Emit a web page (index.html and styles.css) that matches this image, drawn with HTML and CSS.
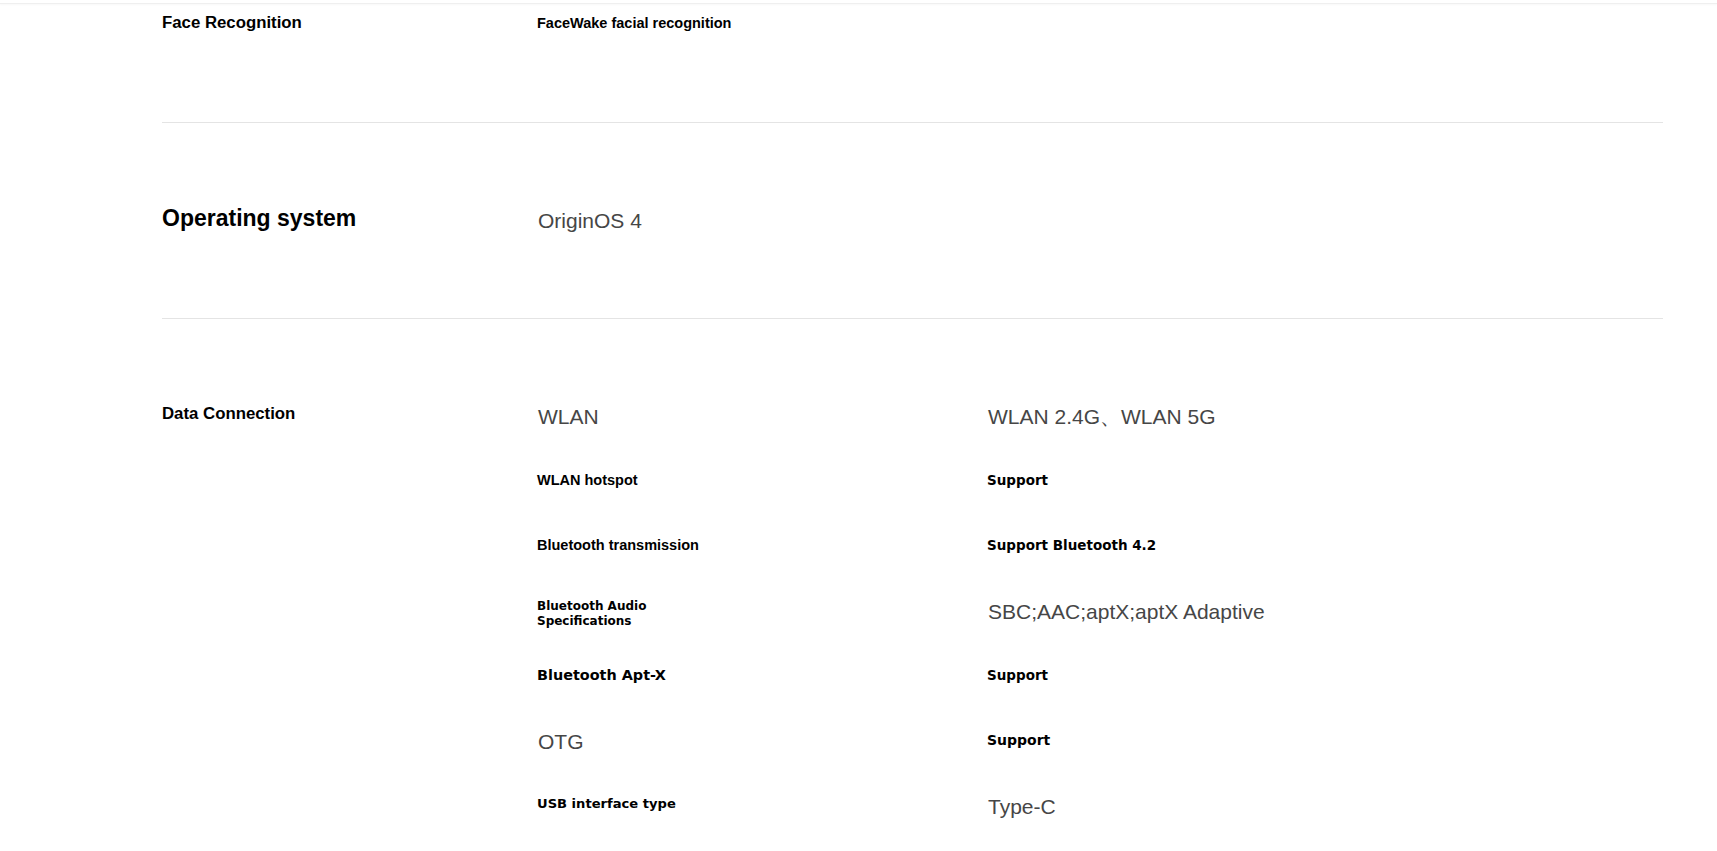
FILE: index.html
```html
<!DOCTYPE html>
<html lang="en">
<head>
    <meta charset="UTF-8">
    <meta name="viewport" content="width=device-width, initial-scale=1.0">
    <title>Specs</title>
    <link rel="stylesheet" href="styles.css">
</head>
<body>
    <div class="topbar"></div>

    <div class="specs">
        <!-- Face Recognition -->
        <section class="spec spec-first">
            <div class="spec-label"><h3>Face Recognition</h3></div>
            <div class="spec-grid">
                <div class="cell name-cond">FaceWake facial recognition</div>
                <div class="cell"></div>
            </div>
        </section>

        <!-- Operating system -->
        <section class="spec">
            <div class="spec-label"><h3 class="big">Operating system</h3></div>
            <div class="spec-grid">
                <div class="cell plain">OriginOS 4</div>
                <div class="cell"></div>
            </div>
        </section>

        <!-- Data Connection -->
        <section class="spec">
            <div class="spec-label"><h3>Data Connection</h3></div>
            <div class="spec-grid">
                <div class="cell plain">WLAN</div>
                <div class="cell plain">WLAN 2.4G、WLAN 5G</div>

                <div class="cell name-cond">WLAN hotspot</div>
                <div class="cell wide">Support</div>

                <div class="cell name-cond">Bluetooth transmission</div>
                <div class="cell wide">Support Bluetooth 4.2</div>

                <div class="cell wide small">Bluetooth Audio<br>Specifications</div>
                <div class="cell plain">SBC;AAC;aptX;aptX Adaptive</div>

                <div class="cell wide large">Bluetooth Apt-X</div>
                <div class="cell wide">Support</div>

                <div class="cell plain">OTG</div>
                <div class="cell wide bolder">Support</div>

                <div class="cell wide usb">USB interface type</div>
                <div class="cell plain">Type-C</div>
            </div>
        </section>
    </div>
</body>
</html>
```

FILE: styles.css
```css
body {
    margin: 0;
    background-color: #fff;
    font-family: 'Liberation Sans', Arial, sans-serif;
    color: #000;
    overflow: hidden;
}

.topbar {
    height: 3px;
    border-bottom: 1px solid #efefef;
    box-shadow: 0 1px 2px rgba(0, 0, 0, 0.03);
}

.specs {
    margin: 0 54px 0 162px;
}

.spec {
    display: flex;
    padding: 65px 0;
    border-bottom: 1px solid #e4e4e4;
}

.spec-first {
    margin-top: -14px;
    padding-top: 0;
    padding-bottom: 67px;
}

.spec-label {
    width: 375px;
    flex-shrink: 0;
    height: 65px;
    padding-bottom: 5px;
    box-sizing: border-box;
    display: flex;
    align-items: center;
}

.spec-first .spec-label {
    padding-bottom: 0;
}

.spec-label h3 {
    margin: 0;
    font-size: 16.8px;
    font-weight: bold;
    line-height: 20px;
}

.spec-label h3.big {
    font-size: 23px;
    line-height: 28px;
}

.spec-grid {
    flex: 1;
    display: grid;
    grid-template-columns: 450px 1fr;
    grid-auto-rows: 65px;
    align-items: center;
}

.name-cond {
    font-size: 14.5px;
    font-weight: bold;
    line-height: 18px;
    padding-bottom: 3px;
}

.spec-first .name-cond {
    padding-bottom: 0;
}

.plain {
    font-size: 21px;
    line-height: 24px;
    color: #464646;
    padding-left: 1px;
}

.wide {
    font-family: 'DejaVu Sans', Verdana, sans-serif;
    font-size: 13.5px;
    font-weight: bold;
    line-height: 17px;
    padding-bottom: 3px;
}

.wide.small {
    font-size: 12px;
    line-height: 15.5px;
    padding-top: 5px;
    padding-bottom: 0;
}

.wide.large {
    font-size: 14.4px;
}

.wide.bolder {
    font-size: 14px;
}

.wide.usb {
    font-size: 13.1px;
    padding-bottom: 6px;
}
```
